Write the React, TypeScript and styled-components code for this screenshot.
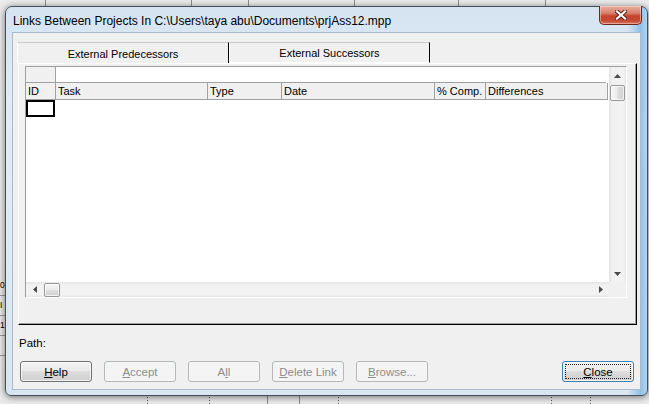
import React from 'react';
import styled, { createGlobalStyle } from 'styled-components';

const GlobalStyle = createGlobalStyle`
  html, body { margin: 0; padding: 0; }
  body {
    width: 649px; height: 404px; overflow: hidden;
    background: #e8e8e8;
    font-family: "Liberation Sans", Arial, sans-serif;
  }
`;

const line = (x: number, top: string, h: string) =>
  `linear-gradient(#8e8e8e, #8e8e8e) ${x}px ${top} / 1px ${h} no-repeat`;
const dotted = (x: number) =>
  `repeating-linear-gradient(180deg, #555 0 1px, transparent 1px 3px) ${x}px 394px / 1px 10px no-repeat`;

const Desktop = styled.div`
  position: relative;
  width: 649px;
  height: 404px;
  overflow: hidden;
  background: ${[
    line(45, '0', '8px'), line(191, '0', '8px'), line(248, '0', '8px'),
    line(354, '0', '8px'), line(458, '0', '8px'), line(545, '0', '8px'),
    dotted(147), dotted(209), dotted(338), dotted(551), dotted(590),
    line(267, '394px', '10px'), line(299, '394px', '10px'),
  ].join(', ')}, #ebebeb;
`;

const SheetColumn = styled.div`
  width: 5px;
  padding-top: 276px;
  display: flex;
  flex-direction: column;
  overflow: hidden;
`;

const SheetCell = styled.div`
  height: 19px;
  border-bottom: 1px solid #9a9a9a;
  font-size: 8.5px;
  line-height: 19px;
  color: #000;
  white-space: nowrap;
`;

const Window = styled.div`
  position: absolute;
  left: 5px;
  top: 6px;
  width: 643px;
  height: 390px;
  box-sizing: border-box;
  border: 1px solid #45505c;
  border-radius: 7px 7px 6px 6px;
  background:
    linear-gradient(90deg, rgba(255,255,255,0) 0%, rgba(255,255,255,0) 97%, rgba(120,180,230,0.75) 99%, rgba(150,200,240,0.6) 100%),
    linear-gradient(180deg, #d6e4f1 0%, #e2ecf6 30%, #d8e6f2 100%);
  box-shadow: 0 1px 7px rgba(0, 0, 0, 0.55);
  display: flex;
  flex-direction: column;
  padding: 0 6px 5px 6px;
`;

const TitleBar = styled.div`
  height: 25px;
  display: flex;
  align-items: center;
  padding: 3px 0 0 1px;
  box-sizing: border-box;
`;

const TitleText = styled.span`
  font-size: 12px;
  color: #000;
  white-space: nowrap;
`;

const CloseX = styled.div`
  position: absolute;
  top: -1px;
  right: 5px;
  width: 43px;
  height: 19px;
  box-sizing: border-box;
  border: 1px solid #6b2a1e;
  border-top: none;
  border-radius: 0 0 5px 5px;
  background: linear-gradient(180deg, #e9b1a4 0%, #d7806c 40%, #c6452e 55%, #c34a33 80%, #d9735a 100%);
  box-shadow: inset 0 0 0 1px rgba(255, 220, 210, 0.5);
  display: flex;
  align-items: center;
  justify-content: center;
`;

const Client = styled.div`
  flex: 1;
  background: #f0f0f0;
  border: 1px solid #a9bccf;
  display: flex;
  flex-direction: column;
  padding: 9px 0 7px 4px;
`;

const TabStrip = styled.div`
  display: flex;
  height: 21px;
`;

const Tab = styled.div<{ $w: number; $active?: boolean }>`
  width: ${(p) => p.$w}px;
  box-sizing: border-box;
  border-top: 1px solid #c9c9c9;
  border-left: 1px solid #ffffff;
  border-right: 1px solid #000000;
  border-bottom: ${(p) => (p.$active ? 'none' : '1px solid #ffffff')};
  background: #f0f0f0;
  font-size: 11px;
  color: #000;
  display: flex;
  align-items: center;
  justify-content: center;
  padding-top: 1px;
`;

const Panel = styled.div`
  margin-left: 1px;
  width: 619px;
  height: 262px;
  box-sizing: border-box;
  border-left: 1px solid #ffffff;
  border-top: 1px solid #ffffff;
  border-right: 1px solid #000000;
  border-bottom: 1px solid #000000;
  box-shadow: inset -1px -1px 0 #a0a0a0;
  padding: 2px 0 0 6px;
`;

const Grid = styled.div`
  width: 602px;
  height: 232px;
  box-sizing: border-box;
  border: 1px solid;
  border-color: #a0a0a0 #ffffff #ffffff #a0a0a0;
  display: grid;
  grid-template-columns: 583px 17px;
  grid-template-rows: 215px 15px;
  background: #fff;
`;

const Sheet = styled.div`
  background: #fff;
  display: flex;
  flex-direction: column;
  overflow: hidden;
`;

const Row = styled.div<{ $h: number }>`
  display: flex;
  height: ${(p) => p.$h}px;
  flex-shrink: 0;
`;

const HeadCell = styled.div<{ $w: number }>`
  width: ${(p) => p.$w}px;
  flex-shrink: 0;
  box-sizing: border-box;
  background: #f0f0f0;
  border-right: 1px solid #a0a0a0;
  border-bottom: 1px solid #a0a0a0;
  font-size: 11px;
  color: #000;
  padding: 2px 0 0 2px;
  white-space: nowrap;
  overflow: hidden;
`;

const EntryBar = styled.div`
  flex: 1;
  box-sizing: border-box;
  background: #fff;
  border-bottom: 1px solid #a0a0a0;
  margin-right: 3px;
`;

const SelectedCell = styled.div`
  width: 29px;
  height: 17px;
  box-sizing: border-box;
  border: 2px solid #000;
  background: #fff;
`;

const VScroll = styled.div`
  display: flex;
  flex-direction: column;
  align-items: center;
  background: linear-gradient(90deg, #e4e4e4 0%, #f1f1f1 20%, #f3f3f3 80%, #e9e9e9 100%);
`;

const HScroll = styled.div`
  display: flex;
  align-items: center;
  background: linear-gradient(180deg, #e4e4e4 0%, #f1f1f1 20%, #f3f3f3 80%, #e9e9e9 100%);
`;

const Corner = styled.div`
  background: #f0f0f0;
`;

const ArrowBox = styled.div<{ $v?: boolean }>`
  width: 17px;
  height: ${(p) => (p.$v ? '17px' : '15px')};
  display: flex;
  align-items: center;
  justify-content: center;
  flex-shrink: 0;
`;

const Track = styled.div`
  flex: 1;
`;

const VThumb = styled.div`
  width: 15px;
  height: 16px;
  margin-top: 1px;
  box-sizing: border-box;
  border: 1px solid #999;
  border-radius: 2px;
  background: linear-gradient(90deg, #f6f6f6 0%, #ececec 45%, #dcdcdc 55%, #d2d2d2 100%);
  box-shadow: inset 0 0 0 1px rgba(255, 255, 255, 0.7);
`;

const HThumb = styled.div`
  width: 16px;
  height: 14px;
  margin-left: 1px;
  box-sizing: border-box;
  border: 1px solid #999;
  border-radius: 2px;
  background: linear-gradient(180deg, #f6f6f6 0%, #ececec 45%, #dcdcdc 55%, #d2d2d2 100%);
  box-shadow: inset 0 0 0 1px rgba(255, 255, 255, 0.7);
`;

const PathRow = styled.div`
  height: 36px;
  display: flex;
  align-items: center;
  padding-left: 2px;
  font-size: 11.5px;
  color: #000;
`;

const ButtonRow = styled.div`
  height: 21px;
  display: flex;
  align-items: center;
  padding: 0 6px 0 3px;
`;

const ButtonGroup = styled.div`
  display: flex;
  gap: 12px;
  flex: 1;
`;

const Button = styled.div<{ $disabled?: boolean; $focused?: boolean }>`
  width: 72px;
  height: 21px;
  box-sizing: border-box;
  border: 1px solid ${(p) => (p.$disabled ? '#b5b9bc' : p.$focused ? '#3c7fb1' : '#707070')};
  border-radius: 3px;
  background: ${(p) =>
    p.$disabled
      ? '#f4f4f4'
      : 'linear-gradient(180deg, #f2f2f2 0%, #ebebeb 49%, #dddddd 50%, #cfcfcf 100%)'};
  box-shadow: ${(p) => (p.$disabled ? 'none' : 'inset 0 0 0 1px rgba(255,255,255,0.75)')};
  color: ${(p) => (p.$disabled ? '#8d8d8d' : '#000')};
  font-size: 11.5px;
  display: flex;
  align-items: center;
  justify-content: center;
  position: relative;
`;

const FocusRing = styled.span`
  position: absolute;
  inset: 2px;
  border: 1px dotted #222;
  border-radius: 1px;
  pointer-events: none;
`;

const Up = () => (
  <svg width="7" height="4" viewBox="0 0 7 4"><path d="M3.5 0 L7 4 L0 4 Z" fill="#4a4a4a" /></svg>
);
const Down = () => (
  <svg width="7" height="4" viewBox="0 0 7 4"><path d="M0 0 L7 0 L3.5 4 Z" fill="#4a4a4a" /></svg>
);
const Left = () => (
  <svg width="4" height="7" viewBox="0 0 4 7"><path d="M4 0 L4 7 L0 3.5 Z" fill="#4a4a4a" /></svg>
);
const Right = () => (
  <svg width="4" height="7" viewBox="0 0 4 7"><path d="M0 0 L0 7 L4 3.5 Z" fill="#4a4a4a" /></svg>
);

const columns = [
  { label: 'ID', w: 30 },
  { label: 'Task', w: 152 },
  { label: 'Type', w: 74 },
  { label: 'Date', w: 153 },
  { label: '% Comp.', w: 51 },
  { label: 'Differences', w: 122 },
];

export default function App() {
  return (
    <>
      <GlobalStyle />
      <Desktop>
        <SheetColumn>
          <SheetCell>0</SheetCell>
          <SheetCell>I</SheetCell>
          <SheetCell>1</SheetCell>
          <SheetCell />
        </SheetColumn>
        <Window>
          <TitleBar>
            <TitleText>Links Between Projects In C:\Users\taya abu\Documents\prjAss12.mpp</TitleText>
          </TitleBar>
          <CloseX>
            <svg width="12" height="10" viewBox="0 0 12 10">
              <path d="M2 1.5 L10 8.5 M10 1.5 L2 8.5" stroke="#5b1c12" strokeWidth="4" strokeLinecap="square" />
              <path d="M2 1.5 L10 8.5 M10 1.5 L2 8.5" stroke="#ffffff" strokeWidth="2.2" strokeLinecap="square" />
            </svg>
          </CloseX>
          <Client>
            <TabStrip>
              <Tab $w={212} $active>External Predecessors</Tab>
              <Tab $w={201}>External Successors</Tab>
            </TabStrip>
            <Panel>
              <Grid>
                <Sheet>
                  <Row $h={16}>
                    <HeadCell $w={30} />
                    <EntryBar />
                  </Row>
                  <Row $h={17}>
                    {columns.map((c) => (
                      <HeadCell key={c.label} $w={c.w}>{c.label}</HeadCell>
                    ))}
                  </Row>
                  <Row $h={17}>
                    <SelectedCell />
                  </Row>
                </Sheet>
                <VScroll>
                  <ArrowBox $v><Up /></ArrowBox>
                  <VThumb />
                  <Track />
                  <ArrowBox $v><Down /></ArrowBox>
                </VScroll>
                <HScroll>
                  <ArrowBox><Left /></ArrowBox>
                  <HThumb />
                  <Track />
                  <ArrowBox><Right /></ArrowBox>
                </HScroll>
                <Corner />
              </Grid>
            </Panel>
            <PathRow>Path:</PathRow>
            <ButtonRow>
              <ButtonGroup>
                <Button><span><u>H</u>elp</span></Button>
                <Button $disabled><span><u>A</u>ccept</span></Button>
                <Button $disabled><span>A<u>l</u>l</span></Button>
                <Button $disabled><span><u>D</u>elete Link</span></Button>
                <Button $disabled><span><u>B</u>rowse...</span></Button>
              </ButtonGroup>
              <Button $focused><span><u>C</u>lose</span><FocusRing /></Button>
            </ButtonRow>
          </Client>
        </Window>
      </Desktop>
    </>
  );
}
